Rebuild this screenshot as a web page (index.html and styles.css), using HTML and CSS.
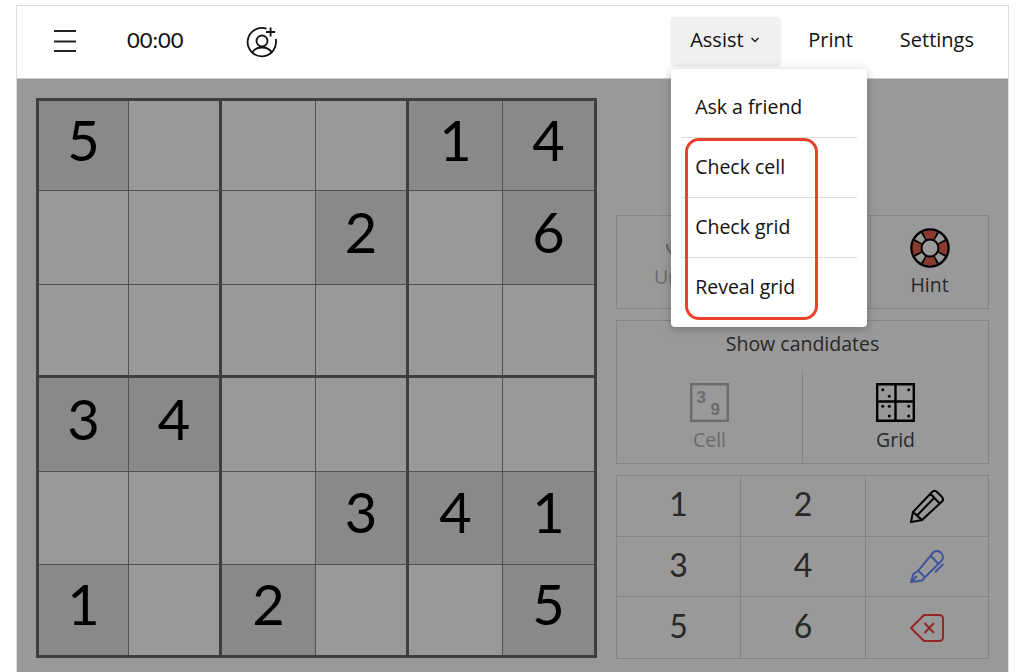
FILE: index.html
```html
<!DOCTYPE html>
<html lang="en">
<head>
  <meta charset="UTF-8" />
  <title>Sudoku</title>
  <link rel="stylesheet" href="styles.css">
</head>
<body>

  <div class="frame">
    <header class="toolbar">
      <div class="left-tools">
        <svg class="menu-icon" width="22" height="22" viewBox="0 0 22 22">
          <path d="M0 1h22M0 11.500h22M0 21h22" fill="none" stroke="#222" stroke-width="2"/>
        </svg>
        <span class="timer">00:00</span>
        <svg class="friend-icon" width="32" height="32" viewBox="0 0 32 32" fill="none" stroke="#111" stroke-width="1.800">
          <path d="M20.500 2.700A14.200 14.200 0 1 0 29.700 13"/>
          <circle cx="16" cy="15" r="5.500"/>
          <path d="M6 27C8 23 12 21.500 16 21.500S24 23 26 27"/>
          <path d="M24.600 1.500v9M20.100 6h9"/>
        </svg>
      </div>
      <nav class="right-tools">
        <div class="assist">
          <button class="assist-btn"><span class="assist-label">Assist</span>
            <svg width="10" height="6" viewBox="0 0 10 6"><path d="M1.500 1L5 4.500 8.500 1" fill="none" stroke="#222" stroke-width="1.500"/></svg>
          </button>
          <div class="assist-menu">
            <div class="menu-item">Ask a friend</div>
            <div class="menu-item">Check cell</div>
            <div class="menu-item">Check grid</div>
            <div class="menu-item last">Reveal grid</div>
            <div class="callout"></div>
          </div>
        </div>
        <a class="tool-link print">Print</a>
        <a class="tool-link">Settings</a>
      </nav>
    </header>

    <main class="game">
      <div class="board">
        <div class="cell given">5</div><div class="cell"></div><div class="cell"></div><div class="cell"></div><div class="cell given">1</div><div class="cell given">4</div>
        <div class="cell"></div><div class="cell"></div><div class="cell"></div><div class="cell given">2</div><div class="cell"></div><div class="cell given">6</div>
        <div class="cell"></div><div class="cell"></div><div class="cell"></div><div class="cell"></div><div class="cell"></div><div class="cell"></div>
        <div class="cell given">3</div><div class="cell given">4</div><div class="cell"></div><div class="cell"></div><div class="cell"></div><div class="cell"></div>
        <div class="cell"></div><div class="cell"></div><div class="cell"></div><div class="cell given">3</div><div class="cell given">4</div><div class="cell given">1</div>
        <div class="cell given">1</div><div class="cell"></div><div class="cell given">2</div><div class="cell"></div><div class="cell"></div><div class="cell given">5</div>
      </div>

      <aside class="controls">
        <div class="actions">
          <div class="action disabled">
            <svg width="32" height="32" viewBox="0 0 32 32" fill="none" stroke="#b5b5b5" stroke-width="2.500">
              <path d="M4 16A12 12 0 1 0 16 4H9M13 0L9 4l4 4"/>
            </svg>
            <span>Undo</span>
          </div>
          <div class="action"></div>
          <div class="action">
            <svg width="40" height="40" viewBox="0 0 40 40">
              <circle cx="20" cy="20" r="18.500" fill="#fff" stroke="#000" stroke-width="2.500"/>
              <circle cx="20" cy="20" r="13" fill="none" stroke="#000" stroke-width="9" pathLength="100" stroke-dasharray="17 8" stroke-dashoffset="8.500"/>
              <circle cx="20" cy="20" r="13" fill="none" stroke="#e8604a" stroke-width="9" pathLength="100" stroke-dasharray="13 12" stroke-dashoffset="6.500"/>
              <circle cx="20" cy="20" r="8.500" fill="#fff" stroke="#000" stroke-width="2"/>
            </svg>
            <span>Hint</span>
          </div>
        </div>

        <div class="candidates">
          <div class="candidates-title">Show candidates</div>
          <div class="candidates-row">
            <div class="candidate disabled">
              <svg width="39" height="39" viewBox="0 0 39 39">
                <rect x="1.200" y="1.200" width="36.600" height="36.600" fill="none" stroke="#b5b5b5" stroke-width="2.400"/>
                <text x="6.500" y="19.500" class="mini-digit">3</text>
                <text x="20.500" y="32" class="mini-digit">9</text>
              </svg>
              <span>Cell</span>
            </div>
            <div class="candidate">
              <svg width="39" height="39" viewBox="0 0 39 39">
                <path d="M1.200 1.200h36.600v36.600H1.200zM19.500 1v37M1 18.500h37" fill="none" stroke="#000" stroke-width="2.400"/>
                <g fill="#000">
                  <circle cx="6.700" cy="6.700" r="1.500"/><circle cx="13.300" cy="13.300" r="1.500"/>
                  <circle cx="32.700" cy="6.700" r="1.500"/>
                  <circle cx="6.700" cy="23.300" r="1.500"/><circle cx="13.300" cy="23.300" r="1.500"/><circle cx="13.300" cy="33" r="1.500"/>
                  <circle cx="32.700" cy="23.300" r="1.500"/><circle cx="32.700" cy="33" r="1.500"/>
                </g>
              </svg>
              <span>Grid</span>
            </div>
          </div>
        </div>

        <div class="keypad">
          <div class="key">1</div>
          <div class="key">2</div>
          <div class="key">
            <svg width="34" height="34" viewBox="0 0 34 34" fill="none" stroke="#000" stroke-width="2">
              <path d="M1 33L3 23 22 3Q24.500 .5 27 3L32 8Q34 10.500 32 12.500L12 31ZM3 23L12 31M20.700 5L29.300 14.300M7.500 26L25 8"/>
            </svg>
          </div>
          <div class="key">3</div>
          <div class="key">4</div>
          <div class="key">
            <svg width="34" height="34" viewBox="0 0 34 34" fill="none" stroke="#6a8cff" stroke-width="2">
              <path d="M1 33L3.500 25 8.300 21.700 15 28.300 12 31.500ZM1 33L7 27M8.300 21.700L23.300 3.300A6 6 0 0 1 31.700 11.700L15 28.300M20.500 6.500L28.500 15M25 23.300L33.300 15"/>
            </svg>
          </div>
          <div class="key">5</div>
          <div class="key">6</div>
          <div class="key">
            <svg width="34" height="28" viewBox="0 0 34 28" fill="none" stroke="#f64444" stroke-width="2">
              <path d="M1 14L14 1H29Q33 1 33 5V23Q33 27 29 27H14ZM14.500 9L24 19M24 9L14.500 19"/>
            </svg>
          </div>
        </div>
      </aside>

      <div class="scrim"></div>
    </main>
  </div>

</body>
</html>
```

FILE: styles.css
```css
* {
  box-sizing: border-box;
}
html, body {
  height: 100%;
}
body {
  margin: 0;
  padding: 5px 15px 0 16px;
  background: #fff;
  color: #111;
  font-family: 'Open Sans', sans-serif;
  overflow: hidden;
}
.frame {
  height: 667px;
  border: 1px solid #ddd;
  border-bottom: none;
  display: flex;
  flex-direction: column;
}

/* top bar */
.toolbar {
  height: 73px;
  flex: none;
  display: flex;
  justify-content: space-between;
  align-items: center;
  padding: 0 34px 3px 37px;
  background: #fff;
  border-bottom: 1px solid #ccc;
  position: relative;
  z-index: 2;
  font-size: 20px;
}
.left-tools {
  display: flex;
  align-items: center;
}
.timer {
  font-family: 'Lato', sans-serif;
  font-size: 22px;
  margin-left: 51px;
  padding-bottom: 2px;
}
.friend-icon {
  margin-left: 62px;
  margin-top: 2px;
}
.right-tools {
  display: flex;
  align-items: center;
  gap: 28px;
}
.tool-link {
  padding-bottom: 2px;
}
.print {
  margin-right: 19px;
}
.assist {
  position: relative;
}
.assist-btn {
  display: flex;
  align-items: center;
  gap: 6px;
  width: 109px;
  height: 48px;
  padding: 0 19px 2px;
  border: none;
  border-radius: 3px;
  background: #f0f0f0;
  box-shadow: 0 1px 3px rgba(0,0,0,.12);
  color: #111;
  font: inherit;
}
.assist-menu {
  position: absolute;
  top: 52px;
  left: 0;
  width: 196px;
  padding: 9px 10px;
  border-radius: 4px;
  background: #fff;
  box-shadow: 0 2px 10px rgba(0,0,0,.25);
  font-size: 19.500px;
}
.menu-item {
  height: 60px;
  padding: 0 0 2px 14px;
  display: flex;
  align-items: center;
  border-bottom: 1px solid #ddd;
}
.menu-item.last {
  border-bottom-color: transparent;
}
.callout {
  position: absolute;
  top: 69px;
  left: 14px;
  width: 133px;
  height: 182px;
  border: 3px solid #e8432a;
  border-radius: 14px;
}

/* board and controls */
.game {
  flex: 1;
  position: relative;
  display: flex;
  gap: 19px;
  padding: 19px 19px 0;
  background: #fff;
}
.scrim {
  position: absolute;
  inset: 0;
  background: rgba(0,0,0,.4);
}
.board {
  width: 561px;
  height: 560px;
  display: grid;
  grid-template-columns: 90px 93px 94px 93px 94px 91px;
  grid-template-rows: 90px 94px 93px 94px 93px 90px;
  border: 3px solid #686868;
}
.cell {
  display: flex;
  align-items: center;
  justify-content: center;
  padding-bottom: 13px;
  border-right: 1px solid #888;
  border-bottom: 1px solid #888;
  font-family: 'Lato', sans-serif;
  font-size: 56px;
  color: #000;
}
.cell.given {
  background: #e4e4e4;
}
.cell:nth-child(6n+2),
.cell:nth-child(6n+4) {
  border-right: 3px solid #686868;
}
.cell:nth-child(6n) {
  border-right: none;
}
.cell:nth-child(n+13):nth-child(-n+18) {
  border-bottom: 3px solid #686868;
}
.cell:nth-child(n+31) {
  border-bottom: none;
}

.controls {
  width: 373px;
  height: 561px;
  display: flex;
  flex-direction: column;
  justify-content: flex-end;
  gap: 11px;
  font-size: 19.500px;
  color: #444;
}
.disabled {
  color: #b5b5b5;
}
.actions {
  height: 94px;
  display: grid;
  grid-template-columns: 124px 129px 1fr;
  border: 1px solid #dcdcdc;
}
.action {
  display: flex;
  flex-direction: column;
  align-items: center;
  padding-top: 12px;
  gap: 4px;
  line-height: 26px;
}
.action:last-child {
  border-left: 1px solid #dcdcdc;
}
.candidates {
  height: 144px;
  display: flex;
  flex-direction: column;
  border: 1px solid #dcdcdc;
}
.candidates-title {
  height: 49px;
  padding-top: 9px;
  text-align: center;
  line-height: 28px;
}
.candidates-row {
  flex: 1;
  display: grid;
  grid-template-columns: 185px 1fr;
}
.candidate {
  display: flex;
  flex-direction: column;
  align-items: center;
  padding-top: 13px;
  gap: 4px;
  line-height: 28px;
}
.candidate:last-child {
  border-left: 1px solid #dcdcdc;
}
.mini-digit {
  font-family: 'Liberation Sans', sans-serif;
  font-size: 17px;
  font-weight: 700;
  fill: #b5b5b5;
}
.keypad {
  height: 184px;
  display: grid;
  grid-template-columns: 124px 125px 1fr;
  grid-template-rows: repeat(3, 1fr);
  border: 1px solid #dcdcdc;
}
.key {
  display: flex;
  align-items: center;
  justify-content: center;
  padding-bottom: 4px;
  border-right: 1px solid #dcdcdc;
  border-bottom: 1px solid #dcdcdc;
  font-family: 'Lato', sans-serif;
  font-size: 32px;
  color: #444;
}
.key svg {
  margin-top: 4px;
}
.key:nth-child(3n) {
  border-right: none;
}
.key:nth-child(n+7) {
  border-bottom: none;
}
```
